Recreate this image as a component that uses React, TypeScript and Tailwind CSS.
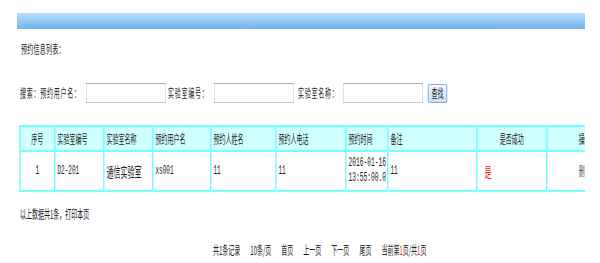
import React from 'react';

const cols = [
  { label: '序号', w: 'w-[70px]', center: true },
  { label: '实验室编号', w: 'w-[98px]' },
  { label: '实验室名称', w: 'w-[98px]' },
  { label: '预约用户名', w: 'w-[116px]' },
  { label: '预约人姓名', w: 'w-[130px]' },
  { label: '预约人电话', w: 'w-[140px]' },
  { label: '预约时间', w: 'w-[84px]' },
  { label: '备注', w: 'w-[178px]' },
  { label: '是否成功', w: 'w-[140px]', center: true },
  { label: '操作', w: 'w-[152px]', center: true },
];

const mono = { fontFamily: '"Liberation Mono", monospace' };
const cell = 'border-x-[3px] border-y-2 border-[#7ff]';

const SearchInput = () => (
  <input
    type="text"
    className="w-[160px] h-[20px] border border-[#c6c6c6] border-t-[#a9a9a9] bg-white outline-none"
  />
);

export default function App() {
  return (
    <div className="w-[600px] h-[263px] overflow-hidden bg-white">
      <div
        className="w-[1200px] origin-top-left scale-x-50 text-[12px] leading-[12px] text-[#222]"
        style={{ fontFamily: '"Noto Sans CJK SC", "Liberation Sans", sans-serif' }}
      >
        {/* top bar */}
        <div className="ml-[34px] mt-[13px] h-[16px] w-[1136px] bg-gradient-to-b from-[#b9ddff] to-[#70b2ea]" />

        <div className="ml-[42px] mt-[14px] h-[12px] tracking-[0.5px]">预约信息列表：</div>

        {/* search */}
        <div className="ml-[40px] mt-[28px] flex h-[20px] items-center">
          <span className="w-[132px] tracking-[1.5px]">搜索：预约用户名：</span>
          <SearchInput />
          <span className="w-[96px] pl-[4px] tracking-[1.5px]">实验室编号：</span>
          <SearchInput />
          <span className="w-[98px] pl-[8px] tracking-[1.5px]">实验室名称：</span>
          <SearchInput />
          <button className="ml-[10px] h-[19px] w-[38px] rounded-[2px] border border-[#5b8fd0] bg-gradient-to-b from-[#f4f9ff] to-[#c9def5] text-[12px] leading-[12px] text-[#222]">
            查找
          </button>
        </div>

        {/* table */}
        <div className="ml-[38px] mt-[22px] w-[1132px] overflow-hidden">
          <table className="w-[1206px] table-fixed border-collapse border-2 border-[#6ff]">
            <thead>
              <tr className="h-[25px] bg-[#cfffff]">
                {cols.map((c) => (
                  <th
                    key={c.label}
                    className={`${c.w} ${cell} px-[4px] font-normal ${c.center ? 'text-center' : 'text-left'}`}
                  >
                    {c.label}
                  </th>
                ))}
              </tr>
            </thead>
            <tbody>
              <tr className="h-[40px]">
                <td className={`${cell} text-center`} style={mono}>1</td>
                <td className={`${cell} px-[4px]`} style={mono}>D2-201</td>
                <td className={`${cell} px-[4px] text-[14px]`}>通信实验室</td>
                <td className={`${cell} px-[4px]`} style={mono}>xs001</td>
                <td className={`${cell} px-[4px]`} style={mono}>11</td>
                <td className={`${cell} px-[4px]`} style={mono}>11</td>
                <td className={`${cell} pl-[4px] text-[12.5px] leading-[15px]`} style={mono}>
                  2016-01-16 13:55:00.0
                </td>
                <td className={`${cell} px-[4px]`} style={mono}>11</td>
                <td className={`${cell} px-[14px] text-[14px] text-[#e52b2b]`}>是</td>
                <td className={`${cell} text-center text-[#555]`}>删除</td>
              </tr>
            </tbody>
          </table>
        </div>

        <div className="ml-[40px] mt-[16px] h-[12px]">以上数据共1条，打印本页</div>

        {/* pagination */}
        <div className="ml-[426px] mt-[24px] flex h-[12px] gap-[20px]">
          <span>共1条记录</span>
          <span>10条/页</span>
          <span>首页</span>
          <span>上一页</span>
          <span>下一页</span>
          <span>尾页</span>
          <span>
            当前第<span className="text-[#e52b2b]">1</span>页/共<span className="text-[#e52b2b]">1</span>页
          </span>
        </div>
      </div>
    </div>
  );
}
